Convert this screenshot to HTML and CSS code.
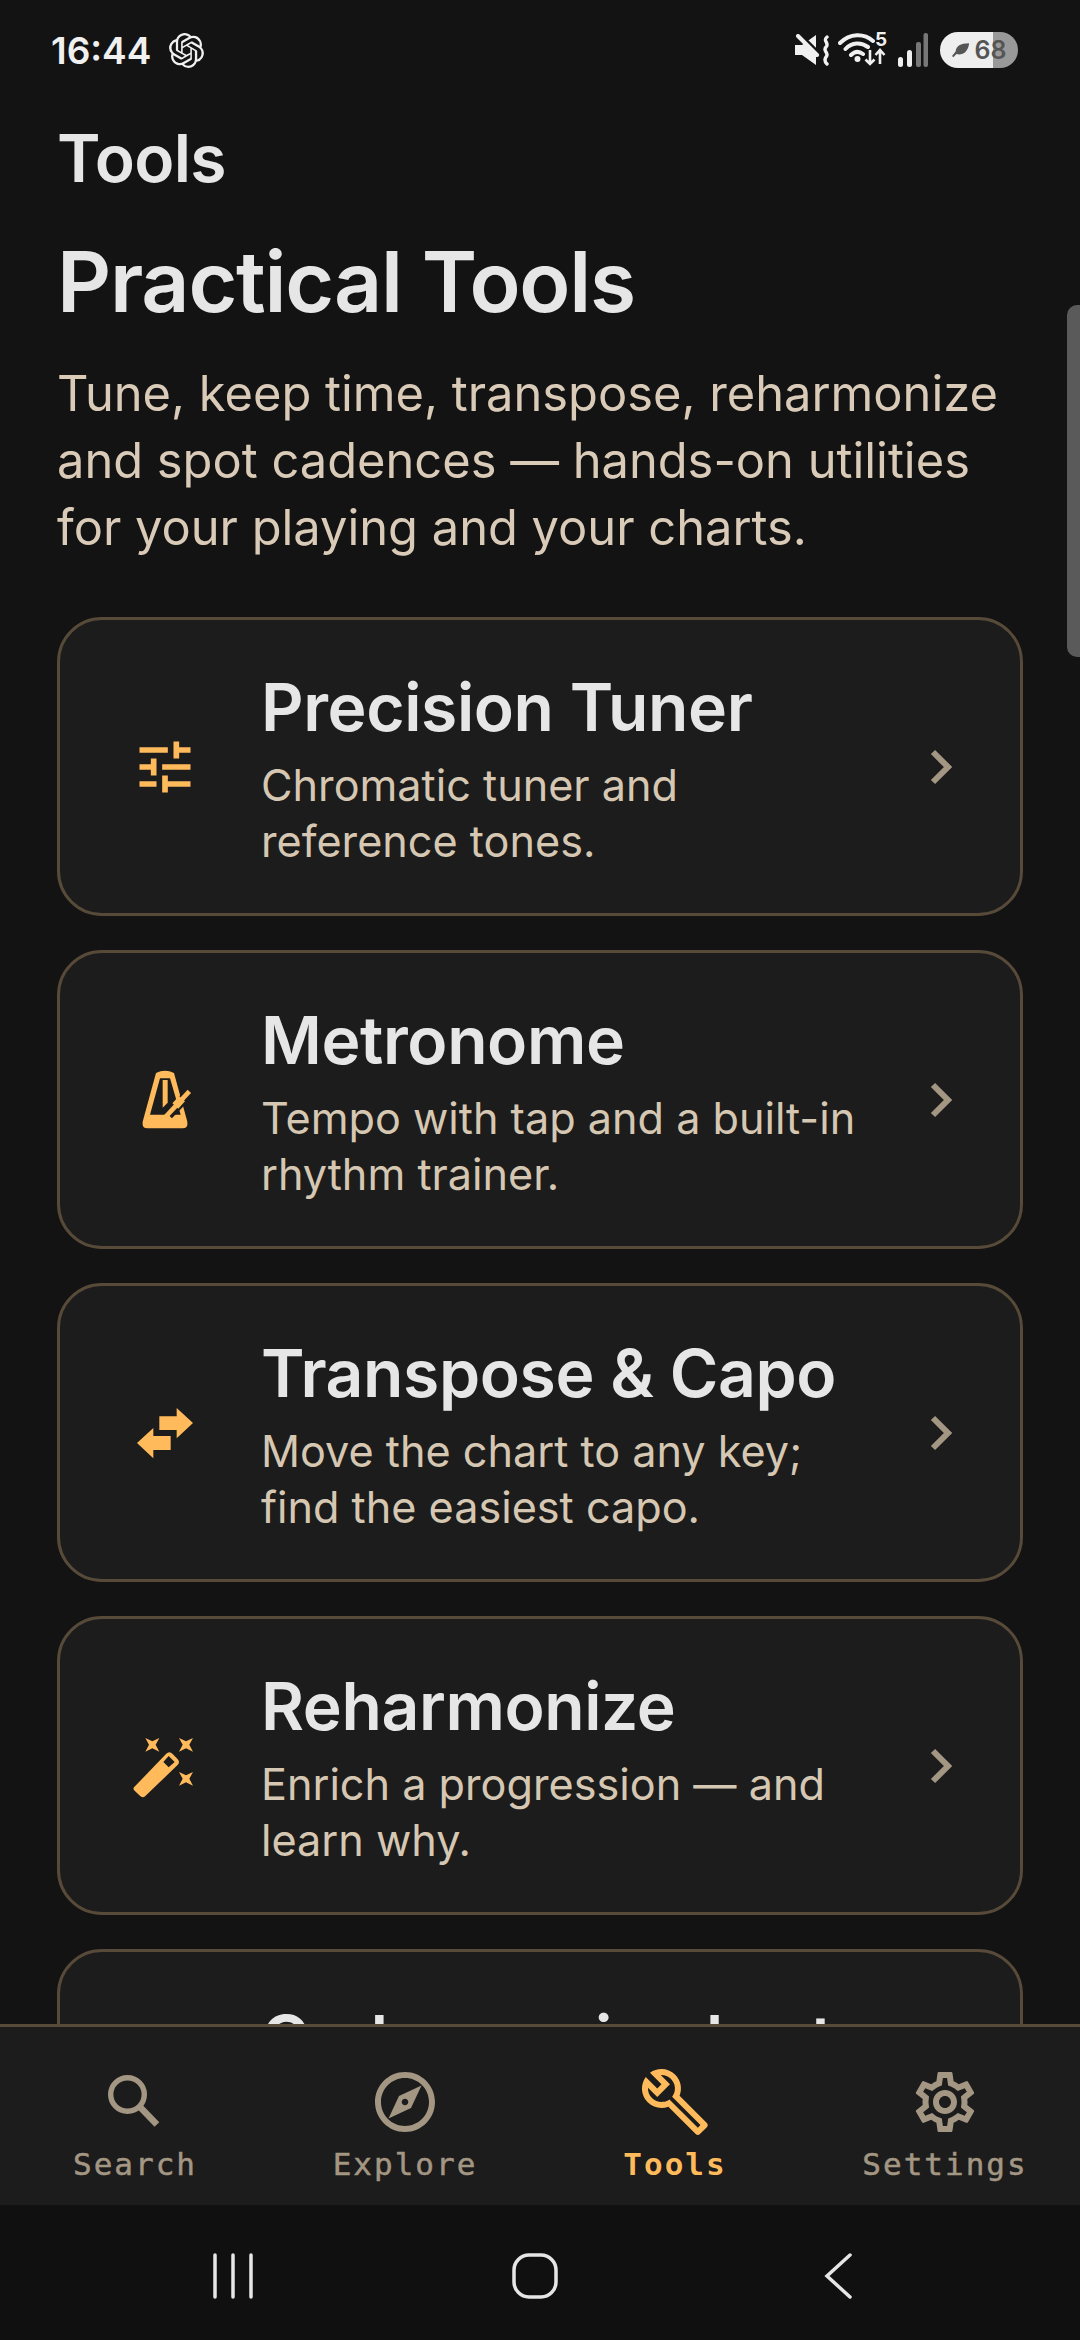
FILE: index.html
```html
<!DOCTYPE html>
<html lang="en">
<head>
    <meta charset="UTF-8">
    <meta name="viewport" content="width=device-width, initial-scale=1.0">
    <title>Tools</title>
    <link rel="stylesheet" href="styles.css">
</head>
<body>
    <div class="phone">
        <div class="status-bar">
            <div class="status-left">
                <span class="clock">16:44</span>
                <svg class="status-logo" viewBox="0 0 24 24"><path fill="#f0f0f0" d="M22.2819 9.8211a5.9847 5.9847 0 0 0-.5157-4.9108 6.0462 6.0462 0 0 0-6.5098-2.9A6.0651 6.0651 0 0 0 4.9807 4.1818a5.9847 5.9847 0 0 0-3.9977 2.9 6.0462 6.0462 0 0 0 .7427 7.0966 5.98 5.98 0 0 0 .511 4.9107 6.051 6.051 0 0 0 6.5146 2.9001A5.9847 5.9847 0 0 0 13.2599 24a6.0557 6.0557 0 0 0 5.7718-4.2058 5.9894 5.9894 0 0 0 3.9977-2.9001 6.0557 6.0557 0 0 0-.7475-7.0729zm-9.022 12.6081a4.4755 4.4755 0 0 1-2.8764-1.0408l.1419-.0804 4.7783-2.7582a.7948.7948 0 0 0 .3927-.6813v-6.7369l2.02 1.1686a.071.071 0 0 1 .038.052v5.5826a4.504 4.504 0 0 1-4.4945 4.4944zm-9.6607-4.1254a4.4708 4.4708 0 0 1-.5346-3.0137l.142.0852 4.783 2.7582a.7712.7712 0 0 0 .7806 0l5.8428-3.3685v2.3324a.0804.0804 0 0 1-.0332.0615L9.74 19.9502a4.4992 4.4992 0 0 1-6.1408-1.6464zM2.3408 7.8956a4.485 4.485 0 0 1 2.3655-1.9728V11.6a.7664.7664 0 0 0 .3879.6765l5.8144 3.3543-2.0201 1.1685a.0757.0757 0 0 1-.071 0l-4.8303-2.7865A4.504 4.504 0 0 1 2.3408 7.872zm16.5963 3.8558L13.1038 8.364 15.1192 7.2a.0757.0757 0 0 1 .071 0l4.8303 2.7913a4.4944 4.4944 0 0 1-.6765 8.1042v-5.6772a.79.79 0 0 0-.407-.667zm2.0107-3.0231l-.142-.0852-4.7735-2.7818a.7759.7759 0 0 0-.7854 0L9.409 9.2297V6.8974a.0662.0662 0 0 1 .0284-.0615l4.8303-2.7866a4.4992 4.4992 0 0 1 6.6802 4.66zM8.3065 12.863l-2.02-1.1638a.0804.0804 0 0 1-.038-.0567V6.0742a4.4992 4.4992 0 0 1 7.3757-3.4537l-.142.0805L8.704 5.459a.7948.7948 0 0 0-.3927.6813zm1.0976-2.3654l2.602-1.4998 2.6069 1.4998v2.9994l-2.5974 1.4997-2.6067-1.4997Z"/></svg>
            </div>
            <div class="status-right">
                <svg class="status-mute" viewBox="0 0 35 32">
                    <path fill="#f0f0f0" d="M0 11h7l14-10v30L7 21H0z"/>
                    <path stroke="#131313" stroke-width="6" d="M1 -2L26 23"/>
                    <path stroke="#f0f0f0" stroke-width="4" stroke-linecap="round" d="M3 2L22 21"/>
                    <path fill="none" stroke="#f0f0f0" stroke-width="3.4" stroke-linecap="round" d="M32 3c-5 4 3 6 -1 10c-4 4 4 6 0 10c-2 3 -1 5 1 7"/>
                </svg>
                <svg class="status-wifi" viewBox="0 0 50 36">
                    <path fill="none" stroke="#f0f0f0" stroke-width="4" stroke-linecap="round" d="M2 11C12 1 26 1 35 9M7.500 17C14 10 23 10 30 15M13 23C17 19 21 19 25 22"/>
                    <circle cx="19.500" cy="27" r="3" fill="#f0f0f0"/>
                    <path fill="none" stroke="#f0f0f0" stroke-width="2.600" d="M32 18V32M27.500 27.500L32 32L36.500 27.500M42 32V18M37.500 23L42 18L46.500 23"/>
                    <text class="wifi-five" x="37" y="14">5</text>
                </svg>
                <svg class="status-signal" viewBox="0 0 30 34">
                    <rect x="0" y="24" width="5" height="10" rx="2.500" fill="#f0f0f0"/>
                    <rect x="9" y="17" width="5" height="17" rx="2.500" fill="#f0f0f0"/>
                    <rect x="18" y="9" width="5" height="25" rx="2" fill="#777"/>
                    <rect x="25.500" y="0" width="4.500" height="34" rx="2" fill="#777"/>
                </svg>
                <div class="battery">
                    <svg class="battery-leaf" viewBox="0 0 20 16"><path fill="#555" d="M19 0C9 0 5 3 4 9L0 14l1.500 1.500L5 12c6 2 13 -2 14 -12z"/></svg>
                    <span class="battery-level">68</span>
                </div>
            </div>
        </div>

        <main class="content">
            <h1 class="page-title">Tools</h1>
            <h2 class="section-title">Practical Tools</h2>
            <p class="section-text">Tune, keep time, transpose, reharmonize and spot cadences — hands-on utilities for your playing and your charts.</p>

            <div class="tool-card">
                <svg class="tool-icon" viewBox="0 0 24 24"><path d="M3 17v2h6v-2H3zM3 5v2h10V5H3zm10 16v-2h8v-2h-8v-2h-2v6h2zM7 9v2H3v2h4v2h2V9H7zm14 4v-2H11v2h10zm-6-4h2V7h4V5h-4V3h-2v6z"/></svg>
                <div class="tool-text">
                    <h3>Precision Tuner</h3>
                    <p>Chromatic tuner and<br>reference tones.</p>
                </div>
                <svg class="tool-chevron" viewBox="0 0 24 40"><path d="M4 5L19 20L4 35"/></svg>
            </div>

            <div class="tool-card">
                <svg class="tool-icon" viewBox="93 76 204 204">
                    <path d="M168 97Q195 84 222 97L262 243Q265 263 247 263H143Q125 263 128 243Z"/>
                    <path fill="#1c1c1c" d="M180 113H210L242 222H150Z"/>
                    <path d="M188 118H203V186L188 201Z"/>
                    <path fill="none" stroke="#1c1c1c" stroke-width="30" d="M205 222L285 140"/>
                    <path fill="none" stroke="#ffba5c" stroke-width="14" d="M192 234L268 152"/>
                    <path fill="none" stroke="#ffba5c" stroke-width="24" d="M226 196L246 174"/>
                </svg>
                <div class="tool-text">
                    <h3>Metronome</h3>
                    <p>Tempo with tap and a built-in<br>rhythm trainer.</p>
                </div>
                <svg class="tool-chevron" viewBox="0 0 24 40"><path d="M4 5L19 20L4 35"/></svg>
            </div>

            <div class="tool-card">
                <svg class="tool-icon" viewBox="93 85 204 204">
                    <path d="M178 137H230V112L279 157L230 203V178H178Z"/>
                    <path d="M212 196H160V172L111 217L160 263V238H212Z"/>
                </svg>
                <div class="tool-text">
                    <h3>Transpose &amp; Capo</h3>
                    <p>Move the chart to any key;<br>find the easiest capo.</p>
                </div>
                <svg class="tool-chevron" viewBox="0 0 24 40"><path d="M4 5L19 20L4 35"/></svg>
            </div>

            <div class="tool-card">
                <svg class="tool-icon" viewBox="93 94 204 204">
                    <path fill-rule="evenodd" d="M102 260L198 160Q208 150 218 160L232 174Q242 184 232 194L136 286Q128 294 118 284L104 270Q98 265 102 260ZM206 166L190 184L206 200L224 184Z"/>
                    <path d="M136 112L157 122L178 112L167 132L178 153L157 143L136 153L147 132Z"/>
                    <path d="M237 112L258 122L279 112L268 132L279 153L258 143L237 153L248 132Z"/>
                    <path d="M237 214L258 224L279 214L268 234L279 255L258 245L237 255L248 234Z"/>
                </svg>
                <div class="tool-text">
                    <h3>Reharmonize</h3>
                    <p>Enrich a progression — and<br>learn why.</p>
                </div>
                <svg class="tool-chevron" viewBox="0 0 24 40"><path d="M4 5L19 20L4 35"/></svg>
            </div>

            <div class="tool-card">
                <div class="tool-icon"></div>
                <div class="tool-text">
                    <h3>Cadences in chart</h3>
                    <p>&nbsp;<br>&nbsp;</p>
                </div>
            </div>
            <div class="scroll-thumb"></div>
        </main>

        <nav class="tab-bar">
            <div class="tab">
                <svg class="tab-icon" viewBox="0 0 24 24">
                    <circle cx="9.500" cy="9.500" r="5.600" fill="none" stroke="currentColor" stroke-width="1.800"/>
                    <path fill="none" stroke="currentColor" stroke-width="2.200" d="M13.500 13.500L19.300 19.500"/>
                </svg>
                <span>Search</span>
            </div>
            <div class="tab">
                <svg class="tab-icon" viewBox="0 0 24 24"><path fill="currentColor" fill-rule="evenodd" d="M12 2C6.480 2 2 6.480 2 12s4.480 10 10 10 10-4.480 10-10S17.520 2 12 2zm0 18c-4.410 0-8-3.590-8-8s3.590-8 8-8 8 3.590 8 8-3.590 8-8 8zM6.500 17.500l7.510-3.490L17.500 6.500 9.990 9.990 6.500 17.500zm5.500-6.600c.61 0 1.100.49 1.100 1.100s-.49 1.100-1.100 1.100-1.100-.49-1.100-1.100.49-1.100 1.100-1.100z"/></svg>
                <span>Explore</span>
            </div>
            <div class="tab tab-active">
                <svg class="tab-icon" viewBox="0 0 24 24"><path fill="currentColor" d="M22.610 18.990l-9.080-9.080c.93-2.340.45-5.100-1.440-7C9.790.61 6.210.4 3.660 2.260L7.500 6.110 6.080 7.520 2.250 3.690C.39 6.230.6 9.820 2.900 12.110c1.860 1.860 4.570 2.350 6.890 1.480l9.110 9.110c.39.39 1.020.39 1.410 0l2.300-2.300c.4-.38.4-1.010 0-1.410zm-3 1.600l-9.460-9.460c-.61.45-1.290.72-2 .82-1.360.2-2.790-.21-3.830-1.250C3.370 9.760 2.930 8.500 3 7.260l3.090 3.090 4.240-4.240-3.090-3.090c1.240-.07 2.490.37 3.440 1.310 1.080 1.080 1.490 2.570 1.240 3.960-.12.71-.42 1.370-.88 1.960l9.450 9.450-.88.88z"/></svg>
                <span>Tools</span>
            </div>
            <div class="tab">
                <svg class="tab-icon" viewBox="0 0 24 24"><path fill="currentColor" d="M19.430 12.980c.04-.32.07-.64.07-.98 0-.34-.03-.66-.07-.98l2.110-1.650c.19-.15.24-.42.12-.64l-2-3.460c-.09-.16-.26-.25-.44-.25-.06 0-.12.01-.17.03l-2.490 1c-.52-.4-1.080-.73-1.690-.98l-.38-2.650C14.460 2.180 14.250 2 14 2h-4c-.25 0-.46.18-.49.42l-.38 2.650c-.61.25-1.170.59-1.690.98l-2.490-1c-.06-.02-.12-.03-.18-.03-.17 0-.34.09-.43.25l-2 3.460c-.13.22-.07.49.12.64l2.110 1.650c-.04.32-.07.65-.07.98 0 .33.03.66.07.98l-2.110 1.650c-.19.15-.24.42-.12.64l2 3.460c.09.16.26.25.44.25.06 0 .12-.01.17-.03l2.490-1c.52.4 1.080.73 1.690.98l.38 2.650c.03.24.24.42.49.42h4c.25 0 .46-.18.49-.42l.38-2.650c.61-.25 1.170-.59 1.690-.98l2.490 1c.06.02.12.03.18.03.17 0 .34-.09.43-.25l2-3.460c.12-.22.07-.49-.12-.64l-2.110-1.650zm-1.980-1.710c.04.31.05.52.05.73 0 .21-.02.43-.05.73l-.14 1.130.89.7 1.080.84-.7 1.210-1.270-.51-1.040-.42-.9.68c-.43.32-.84.56-1.250.73l-1.060.43-.16 1.130-.2 1.350h-1.400l-.19-1.350-.16-1.130-1.060-.43c-.43-.18-.83-.41-1.230-.71l-.91-.7-1.060.43-1.270.51-.7-1.210 1.080-.84.89-.7-.14-1.130c-.03-.31-.05-.54-.05-.74s.02-.43.05-.73l.14-1.130-.89-.7-1.080-.84.7-1.210 1.270.51 1.040.42.9-.68c.43-.32.84-.56 1.250-.73l1.060-.43.16-1.130.2-1.350h1.390l.19 1.350.16 1.130 1.060.43c.43.18.83.41 1.230.71l.91.7 1.060-.43 1.270-.51.7 1.210-1.070.85-.89.7.14 1.130zM12 8c-2.210 0-4 1.790-4 4s1.790 4 4 4 4-1.790 4-4-1.790-4-4-4zm0 6c-1.100 0-2-.9-2-2s.9-2 2-2 2 .9 2 2-.9 2-2 2z"/></svg>
                <span>Settings</span>
            </div>
        </nav>

        <div class="system-nav">
            <svg class="sys-recents" viewBox="0 0 44 46"><path d="M4 2V44M22 2V44M40 2V44"/></svg>
            <svg class="sys-home" viewBox="0 0 46 46"><rect x="2" y="2" width="42" height="42" rx="15"/></svg>
            <svg class="sys-back" viewBox="0 0 28 46"><path d="M26 2L3 23L26 44"/></svg>
        </div>
    </div>
</body>
</html>
```

FILE: styles.css
```css
body {
    margin: 0;
    padding: 0;
    background-color: #131313;
    font-family: Inter, "Noto Sans", sans-serif;
}

.phone {
    width: 1080px;
    height: 2340px;
    display: flex;
    flex-direction: column;
    overflow: hidden;
}

/* status bar */
.status-bar {
    height: 100px;
    flex: none;
    display: flex;
    justify-content: space-between;
    align-items: center;
    padding: 0 62px 0 51px;
    box-sizing: border-box;
}

.status-left {
    display: flex;
    align-items: center;
    gap: 18px;
}

.clock {
    font-size: 37px;
    font-weight: 600;
    color: #f0f0f0;
}

.status-logo {
    width: 35px;
    height: 35px;
}

.status-right {
    display: flex;
    align-items: center;
    gap: 10px;
}

.status-mute {
    width: 35px;
    height: 32px;
    margin-right: -2px;
}

.status-wifi {
    width: 50px;
    height: 36px;
}

.wifi-five {
    font-size: 19px;
    font-weight: 700;
    fill: #f0f0f0;
}

.status-signal {
    width: 30px;
    height: 34px;
}

.battery {
    width: 78px;
    height: 36px;
    margin-left: 2px;
    border-radius: 18px;
    background: linear-gradient(90deg, #eeeeee 68%, #999999 68%);
    display: flex;
    align-items: center;
    justify-content: center;
    gap: 5px;
}

.battery-leaf {
    width: 18px;
    height: 15px;
}

.battery-level {
    font-size: 25px;
    font-weight: 600;
    color: #555;
}

/* main content */
.content {
    flex: 1;
    min-height: 0;
    position: relative;
    overflow: hidden;
    padding: 16px 57px 0;
}

.page-title {
    margin: 0;
    font-size: 66px;
    line-height: 84px;
    font-weight: 600;
    letter-spacing: -0.7px;
    color: #e6e6e6;
}

.section-title {
    margin: 32px 0 0;
    font-size: 84px;
    line-height: 100px;
    font-weight: 600;
    letter-spacing: -1.200px;
    color: #e6e6e6;
}

.section-text {
    margin: 28px 0 0;
    font-size: 48.800px;
    line-height: 67px;
    color: #d9cbb8;
}

.tool-card {
    height: 299px;
    box-sizing: border-box;
    margin-top: 34px;
    padding: 0 67px 0 71px;
    display: flex;
    align-items: center;
    background-color: #1c1c1c;
    border: 3px solid #574a39;
    border-radius: 45px;
}

.section-text + .tool-card {
    margin-top: 56px;
}

.tool-icon {
    width: 68px;
    height: 68px;
    flex: none;
    fill: #ffba5c;
}

.tool-text {
    flex: 1;
    margin-left: 62px;
    padding-top: 2px;
}

.tool-text h3 {
    margin: 0;
    font-size: 66px;
    line-height: 80px;
    font-weight: 600;
    letter-spacing: -0.4px;
    color: #e6e6e6;
}

.tool-text p {
    margin: 10px 0 0;
    font-size: 43.200px;
    line-height: 56px;
    color: #d6c7b2;
}

.tool-chevron {
    width: 24px;
    height: 40px;
    flex: none;
    fill: none;
    stroke: #a39683;
    stroke-width: 6;
}

.scroll-thumb {
    position: absolute;
    top: 205px;
    right: 0;
    width: 13px;
    height: 352px;
    background-color: #5a5a5a;
    border-radius: 10px 0 0 10px;
}

/* bottom tabs */
.tab-bar {
    height: 181px;
    flex: none;
    box-sizing: border-box;
    display: flex;
    background-color: #1c1c1c;
    border-top: 3px solid #574a39;
    position: relative;
}

.tab {
    width: 270px;
    display: flex;
    flex-direction: column;
    align-items: center;
    padding-top: 39px;
    color: #a39683;
}

.tab-active {
    color: #ffba5c;
}

.tab-icon {
    width: 72px;
    height: 72px;
}

.tab span {
    margin-top: 6px;
    font-family: "DejaVu Sans Mono", monospace;
    font-size: 31px;
    line-height: 40px;
    letter-spacing: 2px;
    -webkit-text-stroke: 0.5px currentColor;
}

.tab-active span {
    font-weight: 700;
    -webkit-text-stroke: 0;
}

/* android nav */
.system-nav {
    height: 135px;
    flex: none;
    position: relative;
    display: grid;
    grid-template-columns: 466px 200px 1fr;
    align-items: start;
    padding-top: 48px;
    box-sizing: border-box;
    background-color: #101010;
}

.system-nav svg {
    fill: none;
    stroke: #e6e6e6;
    stroke-width: 3.500;
    stroke-linecap: round;
}

.sys-recents {
    width: 44px;
    height: 46px;
    margin-left: 211px;
}

.sys-home {
    width: 46px;
    height: 46px;
    margin-left: 46px;
}

.sys-back {
    width: 28px;
    height: 46px;
    margin-left: 158px;
}
```
